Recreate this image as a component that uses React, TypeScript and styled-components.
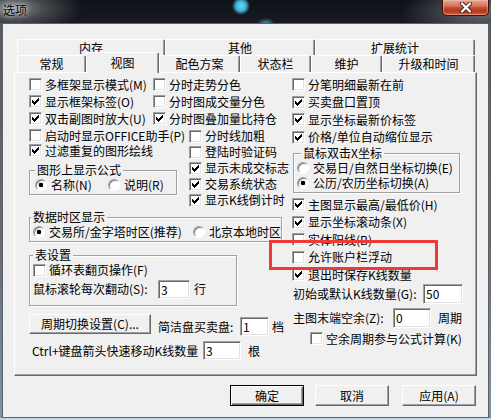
import styled, { createGlobalStyle, css } from 'styled-components';

const FONT = `"Noto Sans CJK SC", "Liberation Sans", sans-serif`;

const GlobalStyle = createGlobalStyle`
  html, body {
    margin: 0;
    padding: 0;
    overflow: hidden;
  }
  body {
    background: #1b1f25;
    font-family: ${FONT};
    font-size: 12px;
    color: #000;
  }
  * {
    box-sizing: border-box;
  }
`;

// window chrome
const Window = styled.div`
  width: 491px;
  height: 420px;
  display: flex;
  flex-direction: column;
  overflow: hidden;
  background: linear-gradient(180deg, #52585f 0%, #656c74 60%, #7f95aa 100%);
`;

const TitleBar = styled.div`
  height: 23px;
  flex: none;
  display: flex;
  justify-content: space-between;
  align-items: flex-start;
  background:
    radial-gradient(ellipse 9px 9px at 241px 6px, #68d8f4 0%, #3fb3d7 55%, rgba(30, 90, 120, 0) 100%),
    radial-gradient(ellipse 9px 5px at 266px 23px, rgba(70, 170, 200, 0.8), rgba(0, 0, 0, 0)),
    radial-gradient(ellipse 70px 26px at 12px 8px, rgba(150, 154, 158, 0.95) 0%, rgba(105, 109, 113, 0.6) 45%, rgba(0, 0, 0, 0) 100%),
    radial-gradient(ellipse 80px 30px at 482px 12px, rgba(112, 116, 121, 0.9) 0%, rgba(0, 0, 0, 0) 100%),
    linear-gradient(180deg, #0f1319 0%, #171b21 100%);
`;

const Caption = styled.span`
  margin: 3px 0 0 3px;
  line-height: 13px;
  font-size: 12px;
  color: #000;
  text-shadow: 0 0 6px rgba(255, 255, 255, 0.8), 0 0 2px rgba(255, 255, 255, 0.6);
`;

const CloseButton = styled.div`
  width: 47px;
  height: 16px;
  margin-right: 2px;
  border: 1px solid #3d1108;
  border-top: none;
  border-radius: 0 0 5px 5px;
  background: linear-gradient(180deg, #e8a594 0%, #d27560 40%, #c24a2f 52%, #b9371c 75%, #d0603f 100%);
  box-shadow: inset 0 0 0 1px rgba(255, 200, 180, 0.45);
  display: flex;
  align-items: center;
  justify-content: center;
`;

const Body = styled.div`
  flex: none;
  height: 395px;
  margin: 0 2px;
  border: 1px solid #5d6166;
  background: #f0f0f0;
  padding: 15px 0 0 11px;
  display: flex;
  flex-direction: column;
`;

const BottomEdge = styled.div`
  flex: none;
  height: 2px;
  background: #c2d6ea;
`;

// tabs
const TabRow = styled.div<{ $h: number }>`
  display: flex;
  align-items: flex-start;
  margin-left: 3px;
  height: ${(p) => p.$h}px;
`;

const Tab = styled.div<{ $w: number; $active?: boolean }>`
  width: ${(p) => p.$w}px;
  height: 100%;
  flex: none;
  display: flex;
  align-items: center;
  justify-content: center;
  background: #f0f0f0;
  border-top: 1px solid #fff;
  border-left: 1px solid #fff;
  border-right: 1px solid #696969;
  box-shadow: inset -1px 0 #a0a0a0;
  border-radius: 2px 2px 0 0;
  white-space: nowrap;
  line-height: 12px;
  ${(p) =>
    p.$active &&
    css`
      position: relative;
      z-index: 2;
      height: 21px;
      margin-top: -3px;
    `}
`;

const Panel = styled.div`
  position: relative;
  width: 463px;
  height: 304px;
  border: 1px solid;
  border-color: #fff #696969 #696969 #fff;
  box-shadow: inset -1px -1px #a0a0a0;
  padding: 3px 0 0 14px;
  display: flex;
`;

// panel layout
const LeftPane = styled.div`
  width: 263px;
  flex: none;
  display: flex;
  flex-direction: column;
`;

const RightPane = styled.div`
  display: flex;
  flex-direction: column;
`;

const TopBlock = styled.div`
  display: flex;
`;

const Column = styled.div<{ $w?: number; $ml?: number; $mt?: number }>`
  display: flex;
  flex-direction: column;
  width: ${(p) => (p.$w ? `${p.$w}px` : 'auto')};
  margin-left: ${(p) => p.$ml ?? 0}px;
  margin-top: ${(p) => p.$mt ?? 0}px;
  flex: none;
`;

const Row = styled.div<{ $h: number; $ml?: number; $mt?: number }>`
  display: flex;
  align-items: center;
  height: ${(p) => p.$h}px;
  margin-left: ${(p) => p.$ml ?? 0}px;
  margin-top: ${(p) => p.$mt ?? 0}px;
  white-space: nowrap;
  flex: none;
`;

const Label = styled.span<{ $w?: number; $ml?: number }>`
  display: inline-block;
  line-height: 12px;
  white-space: nowrap;
  width: ${(p) => (p.$w ? `${p.$w}px` : 'auto')};
  margin-left: ${(p) => p.$ml ?? 0}px;
  flex: none;
`;

const Box = styled.span`
  flex: none;
  width: 13px;
  height: 13px;
  margin-right: 3px;
  background: #fff;
  border: 1px solid;
  border-color: #a0a0a0 #fff #fff #a0a0a0;
  box-shadow: inset 1px 1px #696969, inset -1px -1px #e3e3e3;
  display: flex;
  align-items: center;
  justify-content: center;
`;

const RadioDot = styled.span<{ $on?: boolean }>`
  flex: none;
  width: 12px;
  height: 12px;
  margin-right: 4px;
  border-radius: 50%;
  border: 1px solid;
  border-color: #a0a0a0 #fff #fff #a0a0a0;
  box-shadow: inset 1px 1px #808080;
  background: ${(p) =>
    p.$on ? 'radial-gradient(circle at 50% 50%, #000 0 2px, #fff 2.6px)' : '#fff'};
`;

const RadioItem = styled.span<{ $w?: number }>`
  display: flex;
  align-items: center;
  width: ${(p) => (p.$w ? `${p.$w}px` : 'auto')};
  flex: none;
`;

const GroupBox = styled.div<{ $w: number; $h: number; $pl?: number; $mt?: number; $ml?: number }>`
  width: ${(p) => p.$w}px;
  height: ${(p) => p.$h}px;
  margin-top: ${(p) => p.$mt ?? 0}px;
  margin-left: ${(p) => p.$ml ?? 0}px;
  padding-left: ${(p) => p.$pl ?? 3}px;
  border: 1px solid #a0a0a0;
  box-shadow: inset 1px 1px #fff, 1px 1px #fff;
  display: flex;
  flex-direction: column;
  flex: none;
`;

const GroupTitle = styled.span<{ $x: number }>`
  align-self: flex-start;
  margin: -7px 0 1px ${(p) => p.$x}px;
  height: 12px;
  line-height: 12px;
  padding: 0 2px;
  background: #f0f0f0;
  white-space: nowrap;
`;

const Field = styled.input<{ $w: number; $h?: number }>`
  width: ${(p) => p.$w}px;
  height: ${(p) => p.$h ?? 19}px;
  flex: none;
  margin: 0;
  padding: 0 0 0 2px;
  background: #fff;
  border: 1px solid;
  border-color: #a0a0a0 #fff #fff #a0a0a0;
  box-shadow: inset 1px 1px #696969, inset -1px -1px #e3e3e3;
  font-family: ${FONT};
  font-size: 12px;
  color: #000;
  outline: none;
`;

const PushButton = styled.button<{ $w: number; $h?: number; $default?: boolean; $ml?: number }>`
  width: ${(p) => p.$w}px;
  height: ${(p) => p.$h ?? 21}px;
  margin: 0 0 0 ${(p) => p.$ml ?? 0}px;
  padding: 0;
  flex: none;
  background: #f0f0f0;
  font-family: ${FONT};
  font-size: 12px;
  line-height: 12px;
  color: #000;
  white-space: nowrap;
  border: 1px solid;
  border-color: #fff #696969 #696969 #fff;
  box-shadow: inset -1px -1px #a0a0a0;
  ${(p) =>
    p.$default &&
    css`
      border-color: #000;
      box-shadow: inset 1px 1px #fff, inset -1px -1px #696969, inset -2px -2px #a0a0a0;
    `}
`;

const ButtonRow = styled.div`
  display: flex;
  align-items: flex-start;
  height: 22px;
  margin-top: 8px;
`;

const FieldGroup = styled.span<{ $mt?: number; $ml?: number }>`
  display: flex;
  align-items: center;
  margin-top: ${(p) => p.$mt ?? 0}px;
  margin-left: ${(p) => p.$ml ?? 0}px;
`;

const Highlight = styled.div`
  position: absolute;
  left: 254px;
  top: 167px;
  width: 169px;
  height: 30px;
  border: 3px solid #ee3a35;
  pointer-events: none;
`;

const Footer = styled.div`
  display: flex;
  justify-content: flex-end;
  margin-top: 9px;
  padding-right: 12px;
`;

// little drawings
const Tick = () => (
  <svg width="7" height="7" viewBox="0 0 7 7" shapeRendering="crispEdges">
    <g fill="#000">
      <rect x="6" y="0" width="1" height="1" />
      <rect x="5" y="1" width="2" height="1" />
      <rect x="0" y="2" width="1" height="1" />
      <rect x="4" y="2" width="3" height="1" />
      <rect x="0" y="3" width="2" height="1" />
      <rect x="3" y="3" width="3" height="1" />
      <rect x="0" y="4" width="5" height="1" />
      <rect x="1" y="5" width="3" height="1" />
      <rect x="2" y="6" width="1" height="1" />
    </g>
  </svg>
);

const CloseX = () => (
  <svg width="14" height="11" viewBox="0 0 14 11">
    <path d="M3 1.5 L11 9.5 M11 1.5 L3 9.5" stroke="#4a1a10" strokeWidth="4" strokeLinecap="round" />
    <path d="M3 1.5 L11 9.5 M11 1.5 L3 9.5" stroke="#fff" strokeWidth="2.4" strokeLinecap="round" />
  </svg>
);

function Check({ label, on, h = 17, ml, mt }: { label: string; on?: boolean; h?: number; ml?: number; mt?: number }) {
  return (
    <Row $h={h} $ml={ml} $mt={mt}>
      <Box>{on && <Tick />}</Box>
      <Label>{label}</Label>
    </Row>
  );
}

function Radio({ label, on, w }: { label: string; on?: boolean; w?: number }) {
  return (
    <RadioItem $w={w}>
      <RadioDot $on={on} />
      <Label>{label}</Label>
    </RadioItem>
  );
}

const topTabs = [
  { name: '内存', w: 148 },
  { name: '其他', w: 150 },
  { name: '扩展统计', w: 160 },
];

const bottomTabs = [
  { name: '常规', w: 69 },
  { name: '视图', w: 73, active: true },
  { name: '配色方案', w: 81 },
  { name: '状态栏', w: 71 },
  { name: '维护', w: 71 },
  { name: '升级和时间', w: 93 },
];

export default function App() {
  return (
    <>
      <GlobalStyle />
      <Window>
        <TitleBar>
          <Caption>选项</Caption>
          <CloseButton>
            <CloseX />
          </CloseButton>
        </TitleBar>
        <Body>
          <TabRow $h={16}>
            {topTabs.map((t) => (
              <Tab key={t.name} $w={t.w}>
                {t.name}
              </Tab>
            ))}
          </TabRow>
          <TabRow $h={17}>
            {bottomTabs.map((t) => (
              <Tab key={t.name} $w={t.w} $active={t.active}>
                {t.name}
              </Tab>
            ))}
          </TabRow>
          <Panel>
            <LeftPane>
              <TopBlock>
                <Column $w={124}>
                  <Check label="多框架显示模式(M)" />
                  <Check label="显示框架标签(O)" on />
                  <Check label="双击副图时放大(U)" on />
                  <Check label="启动时显示OFFICE助手(P)" />
                  <Check label="过滤重复的图形绘线" on mt={-2} />
                  <GroupBox $w={148} $h={25} $pl={5} $mt={11}>
                    <GroupTitle $x={0}>图形上显示公式</GroupTitle>
                    <Row $h={16}>
                      <Radio label="名称(N)" on w={73} />
                      <Radio label="说明(R)" />
                    </Row>
                  </GroupBox>
                </Column>
                <Column>
                  <Check label="分时走势分色" />
                  <Check label="分时图成交量分色" />
                  <Check label="分时图叠加量比持仓" on />
                  <Column $ml={36} $mt={1}>
                    <Check label="分时线加粗" h={16} />
                    <Check label="登陆时验证码" h={16} />
                    <Check label="显示未成交标志" on h={16} />
                    <Check label="交易系统状态" on h={16} />
                    <Check label="显示K线倒计时" on h={16} />
                  </Column>
                </Column>
              </TopBlock>

              <GroupBox $w={253} $h={25} $pl={3} $mt={9}>
                <GroupTitle $x={-2}>数据时区显示</GroupTitle>
                <Row $h={16}>
                  <Radio label="交易所/金字塔时区(推荐)" on w={160} />
                  <Radio label="北京本地时区" />
                </Row>
              </GroupBox>

              <GroupBox $w={208} $h={51} $pl={3} $mt={13}>
                <GroupTitle $x={0}>表设置</GroupTitle>
                <Check label="循环表翻页操作(F)" h={16} />
                <Row $h={22}>
                  <Label $w={125}>鼠标滚轮每次翻动(S):</Label>
                  <Field $w={32} readOnly defaultValue="3" />
                  <Label $ml={4}>行</Label>
                </Row>
              </GroupBox>

              <ButtonRow>
                <PushButton $w={122} $h={20}>
                  周期切换设置(C)...
                </PushButton>
                <FieldGroup $mt={3} $ml={7}>
                  <Label $w={82}>简洁盘买卖盘:</Label>
                  <Field $w={29} readOnly defaultValue="1" />
                  <Label $ml={3}>档</Label>
                </FieldGroup>
              </ButtonRow>

              <Row $h={19} $mt={5} $ml={3}>
                <Label $w={171}>Ctrl+键盘箭头快速移动K线数量</Label>
                <Field $w={38} readOnly defaultValue="3" />
                <Label $ml={7}>根</Label>
              </Row>
            </LeftPane>

            <RightPane>
              <Check label="分笔明细最新在前" h={17.5} />
              <Check label="买卖盘口置顶" on h={17.5} />
              <Check label="显示坐标最新价标签" on h={17.5} />
              <Check label="价格/单位自动缩位显示" on h={17.5} />
              <GroupBox $w={167} $h={40} $pl={3} $mt={7} $ml={1}>
                <GroupTitle $x={4}>鼠标双击X坐标</GroupTitle>
                <Row $h={15}>
                  <Radio label="交易日/自然日坐标切换(E)" />
                </Row>
                <Row $h={15}>
                  <Radio label="公历/农历坐标切换(A)" on />
                </Row>
              </GroupBox>
              <Check label="主图显示最高/最低价(H)" on h={17.5} mt={3} />
              <Check label="显示坐标滚动条(X)" on h={17.5} />
              <Check label="实体阳线(B)" h={17.5} />
              <Check label="允许账户栏浮动" h={17.5} />
              <Check label="退出时保存K线数量" on h={17.5} />
              <Row $h={20} $ml={1}>
                <Label $w={130}>初始或默认K线数量(G):</Label>
                <Field $w={40} $h={20} readOnly defaultValue="50" />
              </Row>
              <Row $h={20} $ml={1} $mt={4}>
                <Label $w={100}>主图末端空余(Z):</Label>
                <Field $w={38} $h={20} readOnly defaultValue="0" />
                <Label $ml={7}>周期</Label>
              </Row>
              <Check label="空余周期参与公式计算(K)" h={16} ml={18} mt={3} />
            </RightPane>

            <Highlight />
          </Panel>

          <Footer>
            <PushButton $w={74} $default>
              确定
            </PushButton>
            <PushButton $w={74} $ml={11}>
              取消
            </PushButton>
            <PushButton $w={74} $ml={13}>
              应用(A)
            </PushButton>
          </Footer>
        </Body>
        <BottomEdge />
      </Window>
    </>
  );
}
